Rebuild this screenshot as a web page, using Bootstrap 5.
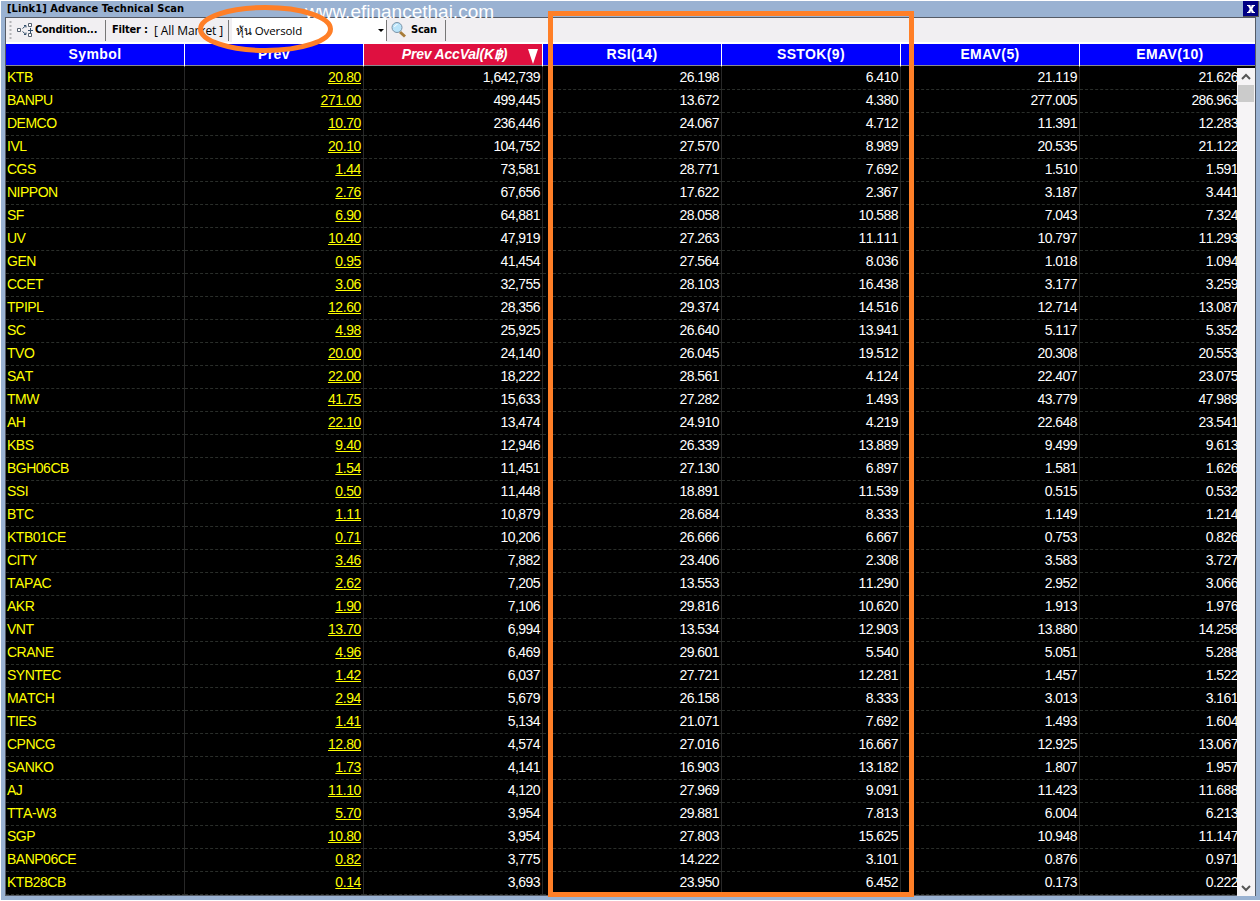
<!DOCTYPE html>
<html lang="en">
<head>
<meta charset="utf-8">
<title>Advance Technical Scan</title>
<link href="https://cdn.jsdelivr.net/npm/bootstrap@5.3.0/dist/css/bootstrap.min.css" rel="stylesheet">
<style>
body{width:1260px;height:901px;overflow:hidden;background:#fff;font-family:"Liberation Sans",sans-serif;line-height:1}
.win{width:1259px;height:899px;margin:1px 0 0 1px;background:#9ab2d2;padding:0 4px 0 4px}
.titlebar{height:16px;font:bold 11px/16px "DejaVu Sans Condensed","Open Sans",sans-serif;letter-spacing:.07px;color:#000;padding-left:2px}
.closebtn{width:16px;height:16px;background:#000084;margin-right:-3px;border-right:1px solid #555;border-bottom:1px solid #555}
.inner{height:879px;border:1px solid #555b66;background:#000}
.tools{height:26px;background:#f1eff2;font:12px/25px "Open Sans",sans-serif;color:#000;border-bottom:2px solid #fff}
.tools b{font:bold 11px/24px "DejaVu Sans Condensed",sans-serif;white-space:nowrap;letter-spacing:-.2px}
.tools .t-cond{width:70px;letter-spacing:-.22px}
.tools .t-filter{width:42px;margin-left:6px}
.tools .t-market{width:74px;letter-spacing:-.1px;white-space:nowrap}
.tools .t-scan{width:34px}
.tools .combo{width:154px;margin-left:3px;font-size:11.5px;letter-spacing:-.1px}
.vsep{width:1px;height:21px;margin-top:2px;background:#777;flex:none}
.tools svg{flex:none}
.grid{display:grid;grid-template-columns:repeat(6,179px) 1fr}
.hd{height:23px;background:#00f;color:#fff;font-weight:bold;font-size:14px;letter-spacing:.38px;line-height:21px;border-right:1px solid #fff;border-bottom:1px solid #000;box-shadow:inset 0 -1px #8a8a90;text-align:center}
.hd:nth-child(7){padding-left:5px}
.hd.sorted{background:#df1040;font-style:italic;letter-spacing:-.2px;padding-left:3px}
.cel{height:23px;border-right:1px solid #282828;border-bottom:1px dashed #2a2e2a;color:#fff;font-size:14px;letter-spacing:-.57px;line-height:21px;text-align:right;padding-right:2px;font-kerning:none}
.sym{color:#ff0;text-align:left;letter-spacing:-.5px;padding-left:1px}
.prev{color:#ff0;text-decoration:underline;letter-spacing:-.4px}
.grid>:nth-child(7n){border-right:0}
.cel:nth-child(7n){padding-right:17px}
.sbar{right:5px;top:68px;width:18px;height:828px;background:#f6f4f6}
.thumb{width:16px;height:17px;background:#cbcbcb;margin:0 1px}
.wm{left:305px;top:2px;font-size:19px;line-height:20px;color:#fff}
.marks{left:0;top:0}
</style>
</head>
<body class="position-relative">
<div class="win">
 <div class="titlebar d-flex justify-content-between"><span>[Link1] Advance Technical Scan</span>
  <span class="closebtn d-flex align-items-center justify-content-center"><svg width="8" height="8"><path d="M0 0h3.500v1L4 2l.5-1V0H8v1H7L5.300 4 7 7h1v1H4.500V7L4 6l-.5 1v1H0V7h1l1.700-3L1 1H0z" fill="#fff"/></svg></span></div>
 <div class="inner">
  <div class="tools d-flex">
   <svg width="29" height="24" viewBox="0 0 29 24"><path d="M4.500 3v18" stroke="#b5b5b8" stroke-width="2" stroke-dasharray="2 2"/><g fill="#fff" stroke="#55606f"><path d="M11.500 10.500h3v3h-3zM22.500 5.500h3v3h-3zM22.500 15.500h3v3h-3z"/></g><path d="M24.500 10v5M22 12.500h5M16.500 10.500l3.500-3M16.500 13.500l3.500 3M18 7.500h2v2M18 16.500h2v-2" stroke="#34506c" fill="none"/></svg>
   <b class="t-cond">Condition...</b><i class="vsep"></i>
   <b class="t-filter">Filter :</b><span class="t-market">[ All Market ]</span><i class="vsep"></i>
   <div class="combo bg-white d-flex justify-content-between"><span class="ms-1">หุ้น Oversold</span><svg width="12" height="24"><path d="M4 11h6l-3 3z"/></svg></div>
   <i class="vsep"></i>
   <svg width="24" height="24"><path d="M13 14l5 4.500" stroke="#a87c38" stroke-width="3"/><circle cx="10" cy="9.500" r="5" fill="#b9e4fa" stroke="#7a93a8"/><path d="M7.500 9q.5-2.500 3-2.500" fill="none" stroke="#fff"/></svg>
   <b class="t-scan">Scan</b><i class="vsep"></i>
  </div>
  <div class="grid" id="grid">
   <div class="hd">Symbol</div><div class="hd">Prev</div><div class="hd sorted position-relative">Prev AccVal(K฿)<svg class="position-absolute" style="right:4px;top:5px" width="10" height="15"><path d="M0 0h10L5 15z" fill="#fff"/></svg></div><div class="hd">RSI(14)</div><div class="hd">SSTOK(9)</div><div class="hd">EMAV(5)</div><div class="hd">EMAV(10)</div>
  </div>
 </div>
</div>
<div class="sbar position-absolute d-flex flex-column"><svg width="18" height="17"><path d="M5 11l4-4 4 4" fill="none" stroke="#555" stroke-width="2"/></svg><div class="thumb"></div><svg class="mt-auto" width="18" height="17"><path d="M5 7l4 4 4-4" fill="none" stroke="#555" stroke-width="2"/></svg></div>
<div class="wm position-absolute">www.efinancethai.com</div>
<svg class="marks position-absolute" width="1260" height="901" fill="none" stroke="#ff7f27" stroke-width="5"><path d="M550.500 13.500h361v881h-361z"/><ellipse cx="265.500" cy="29" rx="65" ry="21.500"/></svg>
<script>
const data=`KTB 20.80 1,642,739 26.198 6.410 21.119 21.626
BANPU 271.00 499,445 13.672 4.380 277.005 286.963
DEMCO 10.70 236,446 24.067 4.712 11.391 12.283
IVL 20.10 104,752 27.570 8.989 20.535 21.122
CGS 1.44 73,581 28.771 7.692 1.510 1.591
NIPPON 2.76 67,656 17.622 2.367 3.187 3.441
SF 6.90 64,881 28.058 10.588 7.043 7.324
UV 10.40 47,919 27.263 11.111 10.797 11.293
GEN 0.95 41,454 27.564 8.036 1.018 1.094
CCET 3.06 32,755 28.103 16.438 3.177 3.259
TPIPL 12.60 28,356 29.374 14.516 12.714 13.087
SC 4.98 25,925 26.640 13.941 5.117 5.352
TVO 20.00 24,140 26.045 19.512 20.308 20.553
SAT 22.00 18,222 28.561 4.124 22.407 23.075
TMW 41.75 15,633 27.282 1.493 43.779 47.989
AH 22.10 13,474 24.910 4.219 22.648 23.541
KBS 9.40 12,946 26.339 13.889 9.499 9.613
BGH06CB 1.54 11,451 27.130 6.897 1.581 1.626
SSI 0.50 11,448 18.891 11.539 0.515 0.532
BTC 1.11 10,879 28.684 8.333 1.149 1.214
KTB01CE 0.71 10,206 26.666 6.667 0.753 0.826
CITY 3.46 7,882 23.406 2.308 3.583 3.727
TAPAC 2.62 7,205 13.553 11.290 2.952 3.066
AKR 1.90 7,106 29.816 10.620 1.913 1.976
VNT 13.70 6,994 13.534 12.903 13.880 14.258
CRANE 4.96 6,469 29.601 5.540 5.051 5.288
SYNTEC 1.42 6,037 27.721 12.281 1.457 1.522
MATCH 2.94 5,679 26.158 8.333 3.013 3.161
TIES 1.41 5,134 21.071 7.692 1.493 1.604
CPNCG 12.80 4,574 27.016 16.667 12.925 13.067
SANKO 1.73 4,141 16.903 13.182 1.807 1.957
AJ 11.10 4,120 27.969 9.091 11.423 11.688
TTA-W3 5.70 3,954 29.881 7.813 6.004 6.213
SGP 10.80 3,954 27.803 15.625 10.948 11.147
BANP06CE 0.82 3,775 14.222 3.101 0.876 0.971
KTB28CB 0.14 3,693 23.950 6.452 0.173 0.222`;
const grid=document.getElementById('grid');
data.split('\n').forEach(r=>r.split(' ').forEach((v,i)=>{const d=document.createElement('div');d.className='cel'+(i==0?' sym':i==1?' prev':'');d.textContent=v;grid.append(d)}));
</script>
<script src="https://cdn.jsdelivr.net/npm/bootstrap@5.3.0/dist/js/bootstrap.bundle.min.js"></script>
</body>
</html>
